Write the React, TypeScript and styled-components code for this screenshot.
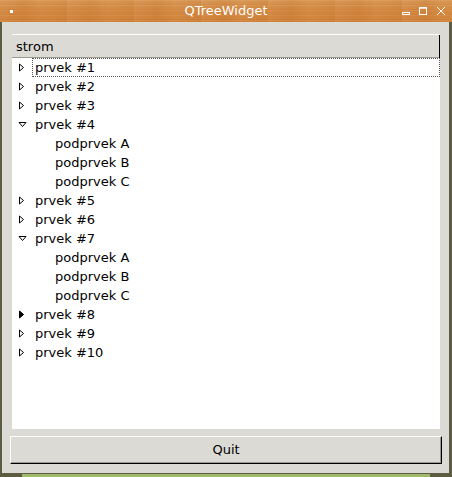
import React from "react";
import styled, { createGlobalStyle } from "styled-components";

const Global = createGlobalStyle`
  html, body { margin: 0; padding: 0; background: #5c5c42; }
  body { font-family: "DejaVu Sans", "Liberation Sans", sans-serif; }
`;

const Window = styled.div`
  width: 452px;
  height: 477px;
  display: flex;
  flex-direction: column;
  background: #5c5c42;
  box-sizing: border-box;
  position: relative;
  overflow: hidden;
`;

const TitleBar = styled.div`
  height: 22px;
  flex: none;
  display: flex;
  align-items: center;
  position: relative;
  background:
    repeating-linear-gradient(
      180deg,
      rgba(255, 255, 255, 0.06) 0px,
      rgba(255, 255, 255, 0.06) 1px,
      rgba(120, 60, 10, 0.08) 2px,
      rgba(255, 220, 160, 0.05) 3px,
      rgba(120, 60, 10, 0.1) 5px
    ),
    repeating-linear-gradient(
      90deg,
      rgba(255, 255, 255, 0.05) 0px,
      rgba(150, 80, 20, 0.06) 23px,
      rgba(255, 230, 180, 0.05) 41px,
      rgba(150, 80, 20, 0.05) 67px
    ),
    linear-gradient(180deg, #d99550 0%, #d5863c 45%, #d08035 100%);
  color: #fff;
`;

const MenuDot = styled.div`
  width: 3px;
  height: 3px;
  background: #fff;
  margin-left: 10px;
  flex: none;
`;

const Title = styled.div`
  position: absolute;
  left: 0;
  right: 0;
  top: 3px;
  text-align: center;
  font-size: 13px;
  line-height: 16px;
  color: #fff;
  pointer-events: none;
`;

const Controls = styled.div`
  margin-left: auto;
  margin-right: 6px;
  display: flex;
  align-items: center;
  gap: 8px;
`;

const Body = styled.div`
  flex: 1;
  margin: 0 3px 4px 2px;
  background: #dcdad5;
  display: flex;
  flex-direction: column;
  padding: 11px 7px 9px 8px;
  gap: 7px;
`;

const Tree = styled.div`
  flex: 1;
  display: flex;
  flex-direction: column;
  margin: 0 2px 0 1px;
  background: #fff;
  border-left: 1px solid #dcdad5;
`;

const Header = styled.div`
  height: 25px;
  flex: none;
  box-sizing: border-box;
  background: #dcdad5;
  border-top: 1px solid #dcdad5;
  box-shadow: inset 0 1px 0 #fff, inset -1px 0 0 #000, inset 0 -1px 0 #9d9a91;
  display: flex;
  align-items: center;
  padding-left: 4px;
  font-size: 13px;
  color: #000;
`;

const Rows = styled.div`
  flex: 1;
  display: flex;
  flex-direction: column;
`;

const Row = styled.div<{ $level: number }>`
  height: 19px;
  box-sizing: border-box;
  display: flex;
  align-items: center;
  padding-left: ${(p) => 6 + p.$level * 20}px;
  font-size: 13px;
  color: #000;
  position: relative;
`;

const Arrow = styled.span`
  width: 15px;
  height: 19px;
  display: flex;
  align-items: center;
  justify-content: flex-start;
  flex: none;
  margin-right: 2px;
`;

const Label = styled.span`
  white-space: nowrap;
`;

const Focus = styled.div`
  position: absolute;
  left: 20px;
  right: 0;
  top: 0;
  bottom: 0;
  border: 1px dotted #555;
  pointer-events: none;
`;

const QuitButton = styled.button`
  height: 28px;
  flex: none;
  margin: 0;
  box-sizing: border-box;
  background: #dcdad5;
  border: 1px solid;
  border-color: #fff #000 #000 #fff;
  box-shadow: inset -1px -1px 0 #9d9a91;
  font-family: "DejaVu Sans", "Liberation Sans", sans-serif;
  font-size: 13px;
  color: #000;
  padding: 0;
  padding-bottom: 2px;
`;

const GreenBar = styled.div`
  position: absolute;
  left: 22px;
  right: 22px;
  bottom: 0;
  height: 3px;
  background: #9dbb6a;
`;

type Item = { label: string; level: number; state?: "closed" | "open" | "hover" };

const items: Item[] = [
  { label: "prvek #1", level: 0, state: "closed" },
  { label: "prvek #2", level: 0, state: "closed" },
  { label: "prvek #3", level: 0, state: "closed" },
  { label: "prvek #4", level: 0, state: "open" },
  { label: "podprvek A", level: 1 },
  { label: "podprvek B", level: 1 },
  { label: "podprvek C", level: 1 },
  { label: "prvek #5", level: 0, state: "closed" },
  { label: "prvek #6", level: 0, state: "closed" },
  { label: "prvek #7", level: 0, state: "open" },
  { label: "podprvek A", level: 1 },
  { label: "podprvek B", level: 1 },
  { label: "podprvek C", level: 1 },
  { label: "prvek #8", level: 0, state: "hover" },
  { label: "prvek #9", level: 0, state: "closed" },
  { label: "prvek #10", level: 0, state: "closed" },
];

function ArrowIcon({ state }: { state?: Item["state"] }) {
  if (!state) return null;
  if (state === "open") {
    return (
      <svg width="9" height="7" viewBox="0 0 9 7">
        <path d="M1 1.5 H8 L4.5 5.5 Z" fill="none" stroke="#000" strokeWidth="1" />
      </svg>
    );
  }
  return (
    <svg width="7" height="9" viewBox="0 0 7 9">
      <path
        d="M1.5 1 V8 L5.5 4.5 Z"
        fill={state === "hover" ? "#000" : "none"}
        stroke="#000"
        strokeWidth="1"
      />
    </svg>
  );
}

export default function App() {
  return (
    <>
      <Global />
      <Window>
        <TitleBar>
          <MenuDot />
          <Title>QTreeWidget</Title>
          <Controls>
            <svg width="9" height="9" viewBox="0 0 9 9">
              <rect x="1.5" y="5.5" width="7" height="2" fill="none" stroke="#fff" />
            </svg>
            <svg width="10" height="10" viewBox="0 0 10 10">
              <rect x="1.5" y="1.5" width="7" height="7" fill="none" stroke="#fff" />
              <line x1="1" y1="2" x2="9" y2="2" stroke="#fff" strokeWidth="1.5" />
            </svg>
            <svg width="10" height="10" viewBox="0 0 10 10">
              <path d="M1 1 L9 9 M9 1 L1 9" stroke="#fff" strokeWidth="1" />
            </svg>
          </Controls>
        </TitleBar>
        <Body>
          <Tree>
            <Header>strom</Header>
            <Rows>
              {items.map((it, i) => (
                <Row key={i} $level={it.level}>
                  <Arrow>
                    <ArrowIcon state={it.state} />
                  </Arrow>
                  <Label>{it.label}</Label>
                  {i === 0 && <Focus />}
                </Row>
              ))}
            </Rows>
          </Tree>
          <QuitButton>Quit</QuitButton>
        </Body>
        <GreenBar />
      </Window>
    </>
  );
}
